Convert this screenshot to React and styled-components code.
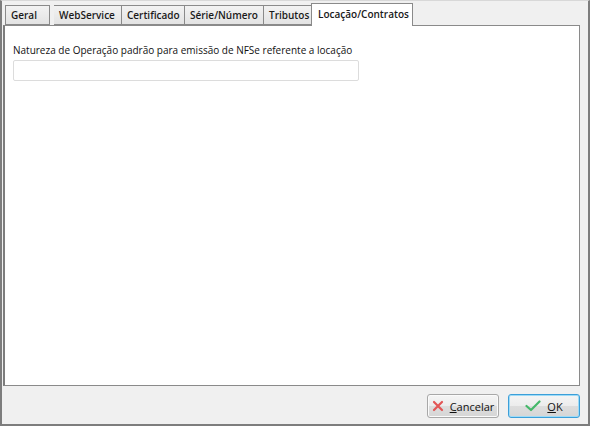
import React from "react";
import styled, { createGlobalStyle } from "styled-components";

const Global = createGlobalStyle`
  html, body { margin: 0; padding: 0; }
  body {
    font-family: "Open Sans", "Liberation Sans", sans-serif;
    font-size: 10px;
    color: #000;
    background: #f0f0f0;
  }
`;

const Window = styled.div`
  width: 590px;
  height: 426px;
  box-sizing: border-box;
  border: 2px solid #7d7d7d;
  border-top: 1px solid #d8d8d8;
  background: #f0f0f0;
  display: flex;
  flex-direction: column;
  padding: 1px 8px 0 1px;
`;

const TabStrip = styled.div`
  display: flex;
  align-items: flex-end;
  height: 23px;
  padding-left: 2px;
  position: relative;
  z-index: 1;
`;

const Tab = styled.div`
  box-sizing: border-box;
  width: ${(p) => p.$w}px;
  height: ${(p) => (p.$active ? "23px" : "20px")};
  margin-bottom: ${(p) => (p.$active ? "-1px" : "0")};
  margin-left: ${(p) => (p.$active ? -1 : p.$gap || 0)}px;
  padding: ${(p) => (p.$active ? "3px 0 0 6px" : "2px 0 0 5px")};
  border: 1px solid #8a8a8a;
  border-bottom: ${(p) => (p.$active ? "none" : "1px solid #8a8a8a")};
  border-left: ${(p) => (p.$first || p.$active ? "1px solid #8a8a8a" : "none")};
  background: ${(p) => (p.$active ? "#fff" : "linear-gradient(#f2f2f2, #e3e3e3)")};
  font-weight: 600;
  font-size: 10px;
  line-height: 15px;
  color: #1a1a1a;
  white-space: nowrap;
`;

const Panel = styled.div`
  height: 361px;
  box-sizing: border-box;
  background: #fff;
  border: 1px solid #8a8a8a;
  border-left: 2px solid #7d7d7d;
  padding: 17px 0 0 8px;
`;

const Label = styled.div`
  font-size: 10px;
  line-height: 14px;
  color: #111;
  margin-bottom: 3px;
`;

const Input = styled.input`
  display: block;
  box-sizing: border-box;
  width: 346px;
  height: 21px;
  border: 1px solid #dcdcdc;
  border-radius: 2px;
  background: #fff;
  outline: none;
  padding: 0 4px;
  font: inherit;
`;

const Footer = styled.div`
  flex: 1;
  display: flex;
  justify-content: flex-end;
  align-items: flex-start;
  gap: 9px;
  padding-top: 8px;
`;

const Button = styled.button`
  box-sizing: border-box;
  width: 72px;
  height: 24px;
  border-radius: 3px;
  border: 1px solid ${(p) => (p.$primary ? "#3c9fd9" : "#a8a8a8")};
  box-shadow: ${(p) => (p.$primary ? "inset 0 0 0 1px #9edbf7" : "inset 0 0 0 1px #fbfbfb")};
  background: linear-gradient(#f5f5f5 0%, #ececec 50%, #dddddd 51%, #d6d6d6 100%);
  display: flex;
  align-items: center;
  justify-content: center;
  gap: 6px;
  font-family: "Open Sans", "Liberation Sans", sans-serif;
  font-size: 11px;
  color: #111;
  padding: 0;
`;

const Underline = styled.span`
  text-decoration: underline;
`;

const CrossIcon = () => (
  <svg width="12" height="12" viewBox="0 0 12 12">
    <path d="M2 2 L10 10 M10 2 L2 10" stroke="#e25656" strokeWidth="2.2" strokeLinecap="round" />
  </svg>
);

const CheckIcon = () => (
  <svg width="16" height="12" viewBox="0 0 16 12">
    <path d="M1.5 6 L6 10 L14.5 1.5" stroke="#45b86a" strokeWidth="2.2" fill="none" strokeLinecap="round" strokeLinejoin="round" />
  </svg>
);

const tabs = [
  { t: "Geral", w: 45 },
  { t: "WebService", w: 68 },
  { t: "Certificado", w: 63 },
  { t: "Série/Número", w: 79 },
  { t: "Tributos", w: 48 },
  { t: "Locação/Contratos", w: 102 },
];

export default function App() {
  return (
    <>
      <Global />
      <Window>
        <TabStrip>
          {tabs.map((t, i) => (
            <Tab key={t.t} $w={t.w} $first={i === 0} $active={i === 5} $gap={i === 1 ? 4 : 0}>
              {t.t}
            </Tab>
          ))}
        </TabStrip>
        <Panel>
          <Label>Natureza de Operação padrão para emissão de NFSe referente a locação</Label>
          <Input />
        </Panel>
        <Footer>
          <Button>
            <CrossIcon />
            <span><Underline>C</Underline>ancelar</span>
          </Button>
          <Button $primary>
            <CheckIcon />
            <span><Underline>O</Underline>K</span>
          </Button>
        </Footer>
      </Window>
    </>
  );
}
